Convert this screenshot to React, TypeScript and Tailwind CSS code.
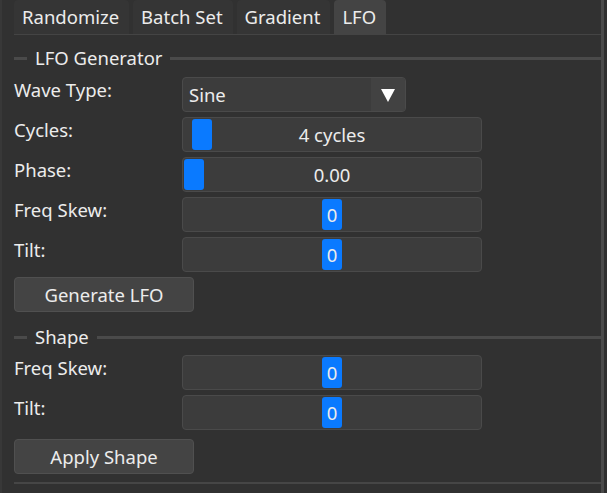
import React from 'react';

const font = { fontFamily: '"Noto Sans", "Open Sans", sans-serif' };

function Tab({ label, active }: { label: string; active?: boolean }) {
  return (
    <div
      className={
        'flex h-[34px] items-center rounded-t-[4px] pl-2 pr-[10px] ' +
        (active ? 'bg-[#444444]' : 'bg-[#353535]')
      }
    >
      {label}
    </div>
  );
}

function GroupTitle({ title }: { title: string }) {
  return (
    <div className="flex h-6 items-center">
      <div className="h-[3px] w-[13px] bg-[#4a4a4a]" />
      <span className="px-2 leading-6">{title}</span>
      <div className="h-[3px] flex-1 bg-[#4a4a4a]" />
    </div>
  );
}

function Row({ label, children }: { label: string; children: React.ReactNode }) {
  return (
    <div className="flex h-[35px] items-start">
      <div className="w-[168px] pt-[1px] leading-6">{label}</div>
      {children}
    </div>
  );
}

function Slider({ text, pos }: { text: string; pos: 'cycles' | 'start' | 'mid' }) {
  return (
    <div className="relative flex h-[35px] w-[300px] items-center justify-center rounded-[4px] border border-[#4a4a4a] bg-[#3c3c3c]">
      {pos === 'cycles' && (
        <div className="absolute left-[9px] top-[1px] h-[31px] w-[20px] rounded-[3px] bg-[#0a7aff]" />
      )}
      {pos === 'start' && (
        <div className="absolute left-[1px] top-[1px] h-[31px] w-[20px] rounded-[3px] bg-[#0a7aff]" />
      )}
      {pos === 'mid' ? (
        <div className="relative flex h-[31px] w-[20px] items-center justify-center rounded-[3px] bg-[#0a7aff]">
          {text}
        </div>
      ) : (
        <span className="relative">{text}</span>
      )}
    </div>
  );
}

function Button({ label }: { label: string }) {
  return (
    <div className="flex h-[35px] w-[180px] items-center justify-center rounded-[4px] border border-[#505050] bg-[#444444]">
      {label}
    </div>
  );
}

export default function App() {
  return (
    <div
      className="flex h-[493px] w-[607px] overflow-hidden bg-[#313131] text-[18.5px] text-[#ececec]"
      style={font}
    >
      <div className="w-[2px] bg-[#383838]" />
      <div className="flex flex-1 flex-col pl-[12px]">
        <div className="flex gap-[4px] border-b border-[#444444]">
          <Tab label="Randomize" />
          <Tab label="Batch Set" />
          <Tab label="Gradient" />
          <Tab label="LFO" active />
        </div>

        <div className="mt-[11px]">
          <GroupTitle title="LFO Generator" />
        </div>

        <div className="mt-[7px] flex flex-col gap-[5px]">
          <Row label="Wave Type:">
            <div className="flex h-[35px] w-[224px] overflow-hidden rounded-[4px] border border-[#4a4a4a] bg-[#3c3c3c]">
              <div className="flex flex-1 items-center pl-[6px]">Sine</div>
              <div className="flex w-[34px] items-center justify-center bg-[#424242]">
                <svg width="14" height="14" viewBox="0 0 14 14">
                  <path d="M0 1 H14 L7 14 Z" fill="#ffffff" />
                </svg>
              </div>
            </div>
          </Row>
          <Row label="Cycles:">
            <Slider text="4 cycles" pos="cycles" />
          </Row>
          <Row label="Phase:">
            <Slider text="0.00" pos="start" />
          </Row>
          <Row label="Freq Skew:">
            <Slider text="0" pos="mid" />
          </Row>
          <Row label="Tilt:">
            <Slider text="0" pos="mid" />
          </Row>
          <Button label="Generate LFO" />
        </div>

        <div className="mt-[13px]">
          <GroupTitle title="Shape" />
        </div>

        <div className="mt-[6px] flex flex-col gap-[5px]">
          <Row label="Freq Skew:">
            <Slider text="0" pos="mid" />
          </Row>
          <Row label="Tilt:">
            <Slider text="0" pos="mid" />
          </Row>
          <div className="mt-[4px]">
            <Button label="Apply Shape" />
          </div>
        </div>

        <div className="mt-[8px] h-[2px] bg-[#464646]" />
      </div>
      <div className="w-[3px] bg-[#4a4a4a]" />
      <div className="w-[3px] bg-[#2f2f2f]" />
    </div>
  );
}
